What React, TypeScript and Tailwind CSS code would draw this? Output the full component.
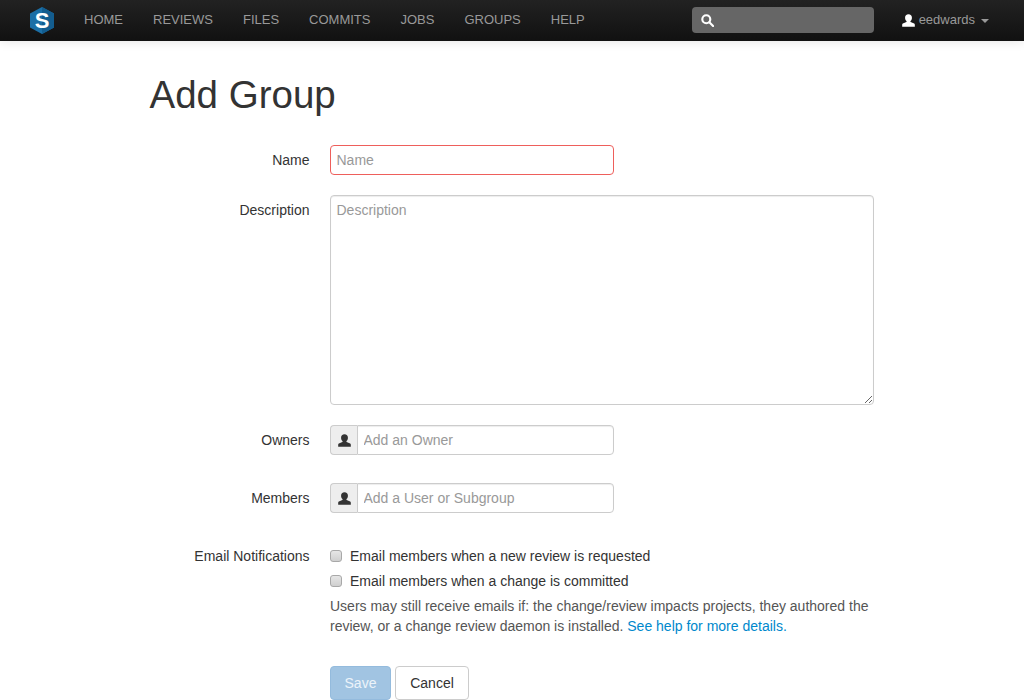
import React from 'react';

const navItems = ['HOME', 'REVIEWS', 'FILES', 'COMMITS', 'JOBS', 'GROUPS', 'HELP'];

const UserIcon: React.FC<{ className?: string }> = ({ className }) => (
    <svg viewBox="0 0 14 14" className={className} fill="currentColor">
        <path d="M7 .3c-2.300 0-3.700 1.600-3.700 3.700 0 1.500.6 2.800 1.500 3.500.3.300.3.900-.1 1.200L.9 10.300C.4 10.600.2 11 .2 11.600V13.700h13.600V11.600c0-.6-.2-1-.7-1.300L9.300 8.700c-.4-.3-.4-.9-.1-1.200.9-.7 1.500-2 1.500-3.500C10.700 1.900 9.300.3 7 .3z" />
    </svg>
);

const Logo: React.FC = () => (
    <svg viewBox="0 0 24 27" className="w-[24px] h-[27px]">
        <path d="M12 0 L24 6.500 V20.500 L12 27 L0 20.500 V6.500 Z" fill="#1b6fa6" />
        <path d="M12 0 L24 6.500 V20.500 L12 27 Z" fill="#135d8f" />
        <text x="12" y="20.500" textAnchor="middle" fontSize="22" fontWeight="700" fill="#ffffff" fontFamily="'Liberation Sans', sans-serif">S</text>
    </svg>
);

const FormRow: React.FC<{ label: string; className?: string; children: React.ReactNode }> = ({ label, className, children }) => (
    <div className={`flex ${className ?? ''}`}>
        <label className="w-[179.500px] mr-[0.5px] text-right pt-[5px] leading-5 text-[#333]">{label}</label>
        <div className="ml-5 flex-1">{children}</div>
    </div>
);

const UserInput: React.FC<{ placeholder: string }> = ({ placeholder }) => (
    <div className="flex w-[284px] h-[30px]">
        <span className="w-[27px] flex items-center justify-center bg-[#eeeeee] border border-[#cccccc] border-r-0 rounded-l text-[#333]">
            <UserIcon className="w-[13px] h-[13px]" />
        </span>
        <input
            placeholder={placeholder}
            className="flex-1 min-w-0 border border-[#cccccc] rounded-r pl-[5.500px] pr-1.5 text-sm outline-none placeholder:text-[#999] shadow-[inset_0_1px_1px_rgba(0,0,0,0.075)]"
        />
    </div>
);

const CheckRow: React.FC<{ label: string; className?: string }> = ({ label, className }) => (
    <label className={`flex items-center h-5 text-[#333] ${className ?? ''}`}>
        <input
            type="checkbox"
            className="appearance-none w-3 h-3 m-0 mr-2 rounded-[3px] border border-[#a8a8a8] bg-gradient-to-b from-[#e6e6e6] to-[#cfcfcf]"
        />
        {label}
    </label>
);

const App: React.FC = () => {
    return (
        <div className="h-[700px] overflow-hidden bg-white text-sm font-['Liberation_Sans',Arial,sans-serif]">
            <nav className="h-[41px] flex items-center bg-gradient-to-b from-[#222222] to-[#111111] shadow-[0_1px_10px_rgba(0,0,0,0.1)]">
                <div className="ml-[30px] w-[24px] flex">
                    <Logo />
                </div>
                <ul className="flex ml-[30px] gap-[30px] text-[13px] text-[#999999]">
                    {navItems.map((item) => (
                        <li key={item}>{item}</li>
                    ))}
                </ul>
                <div className="ml-auto mb-[1px] w-[182px] h-[26px] rounded bg-[#666666] flex items-center pl-[9px] text-white">
                    <svg viewBox="0 0 14 14" className="w-[13px] h-[13px]" fill="none" stroke="currentColor" strokeWidth="2.300">
                        <circle cx="5.700" cy="5.700" r="4.300" />
                        <path d="M9 9l4 4" strokeLinecap="round" />
                    </svg>
                </div>
                <div className="ml-[28px] mr-[35px] flex items-center text-[13px] text-[#999999]">
                    <UserIcon className="w-[13px] h-[13px] text-white mr-[4px]" />
                    <span>eedwards</span>
                    <span className="ml-[6px] w-0 h-0 border-x-[4px] border-x-transparent border-t-[4px] border-t-[#999999]" />
                </div>
            </nav>

            <main className="ml-[130px] w-[744px]">
                <h1 className="ml-[19.500px] mt-[29px] mb-[25px] text-[38.500px] leading-[50px] text-[#333] font-normal">Add Group</h1>

                <FormRow label="Name">
                    <input
                        placeholder="Name"
                        className="block w-[284px] h-[30px] border border-[#ee5f5b] rounded pl-[5.500px] pr-1.5 text-sm outline-none placeholder:text-[#999]"
                    />
                </FormRow>

                <FormRow label="Description" className="mt-5">
                    <textarea
                        placeholder="Description"
                        className="block w-[544px] h-[210px] border border-[#cccccc] rounded pl-[5.500px] pr-1.5 py-1 leading-5 text-sm outline-none placeholder:text-[#999] shadow-[inset_0_1px_1px_rgba(0,0,0,0.075)]"
                    />
                </FormRow>

                <FormRow label="Owners" className="mt-5">
                    <UserInput placeholder="Add an Owner" />
                </FormRow>

                <FormRow label="Members" className="mt-7">
                    <UserInput placeholder="Add a User or Subgroup" />
                </FormRow>

                <FormRow label="Email Notifications" className="mt-[28px]">
                    <div className="pt-[5px]">
                        <CheckRow label="Email members when a new review is requested" />
                        <CheckRow label="Email members when a change is committed" className="mt-[5px]" />
                        <p className="mt-[5px] leading-5 text-[#555555]">
                            Users may still receive emails if: the change/review impacts projects, they authored the review, or a change review daemon is installed.{' '}
                            <span className="text-[#0088cc]">See help for more details.</span>
                        </p>
                    </div>
                </FormRow>

                <div className="ml-[200px] mt-[30px] flex gap-1">
                    <button className="w-[61px] h-[34px] rounded bg-[#a1c4e2] border border-[#94bbdd] text-white/80">Save</button>
                    <button className="w-[74px] h-[34px] rounded bg-white border border-[#cccccc] text-[#333]">Cancel</button>
                </div>
            </main>
        </div>
    );
};

export default App;
